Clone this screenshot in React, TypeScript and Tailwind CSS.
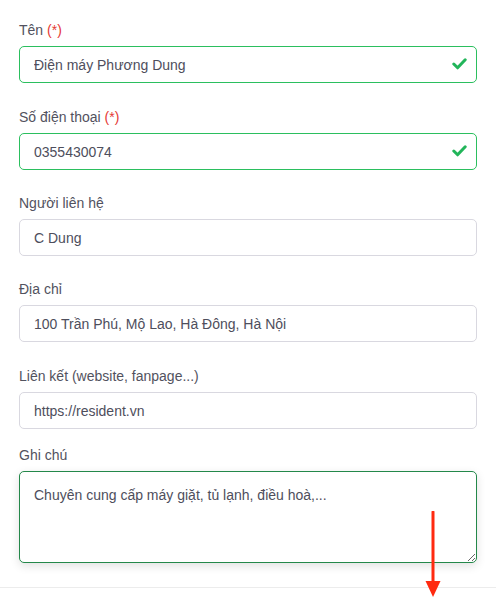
import React from "react";

const fields = [
  { label: "Tên", required: true, value: "Điện máy Phương Dung", valid: true, mb: "mb-[24px]" },
  { label: "Số điện thoại", required: true, value: "0355430074", valid: true, mb: "mb-[23px]" },
  { label: "Người liên hệ", required: false, value: "C Dung", valid: false, mb: "mb-[23px]" },
  { label: "Địa chỉ", required: false, value: "100 Trần Phú, Mộ Lao, Hà Đông, Hà Nội", valid: false, mb: "mb-[24px]" },
  { label: "Liên kết (website, fanpage...)", required: false, value: "https://resident.vn", valid: false, mb: "mb-[16px]" },
];

function Check() {
  return (
    <svg width="15" height="12" viewBox="0 0 15 12" className="absolute right-[10px] top-[12px]">
      <path d="M1.8 6 L5.6 9.8 L13.2 1.8" fill="none" stroke="#22b55a" strokeWidth="3" strokeLinecap="round" strokeLinejoin="round" />
    </svg>
  );
}

export default function App() {
  return (
    <div className="w-[496px] h-[600px] bg-white font-['Liberation_Sans',Arial,sans-serif] relative overflow-hidden">
      <div className="px-[19px] pt-[20px] pb-[24px] border-b border-[#ececec]">
        {fields.map((f, i) => (
          <div key={i} className={f.mb}>
            <label className="block h-5 leading-5 text-[14px] text-[#52525e] mb-[6px]">
              {f.label}
              {f.required && <span className="text-[#e53935]"> (*)</span>}
            </label>
            <div className="relative">
              <input
                readOnly
                value={f.value}
                className={
                  f.valid
                    ? "w-full h-[37px] rounded-[5px] border border-[#2bbf5e] pl-[14px] pr-9 text-[14px] text-[#4e4e5c] outline-none"
                    : "w-full h-[37px] rounded-[5px] border border-[#d9d8e0] pl-[14px] pr-3 text-[14px] text-[#4e4e5c] outline-none"
                }
              />
              {f.valid && <Check />}
            </div>
          </div>
        ))}
        <div>
          <label className="block h-5 leading-5 text-[14px] text-[#52525e] mb-[6px]">Ghi chú</label>
          <textarea
            readOnly
            defaultValue="Chuyên cung cấp máy giặt, tủ lạnh, điều hoà,..."
            className="block w-full h-[92px] rounded-[5px] border border-[#24884a] px-[14px] pt-[13px] text-[14px] leading-5 text-[#4e4e5c] outline-none shadow-[0_3px_10px_rgba(0,0,0,0.12)]"
          />
        </div>
      </div>
      <svg width="20" height="90" viewBox="0 0 20 90" className="absolute left-[423px] top-[511px]">
        <line x1="10" y1="1" x2="10" y2="72" stroke="#ff2a10" strokeWidth="3" strokeLinecap="round" />
        <polygon points="2.5,70 17.5,70 10,86" fill="#ff2a10" />
      </svg>
    </div>
  );
}
